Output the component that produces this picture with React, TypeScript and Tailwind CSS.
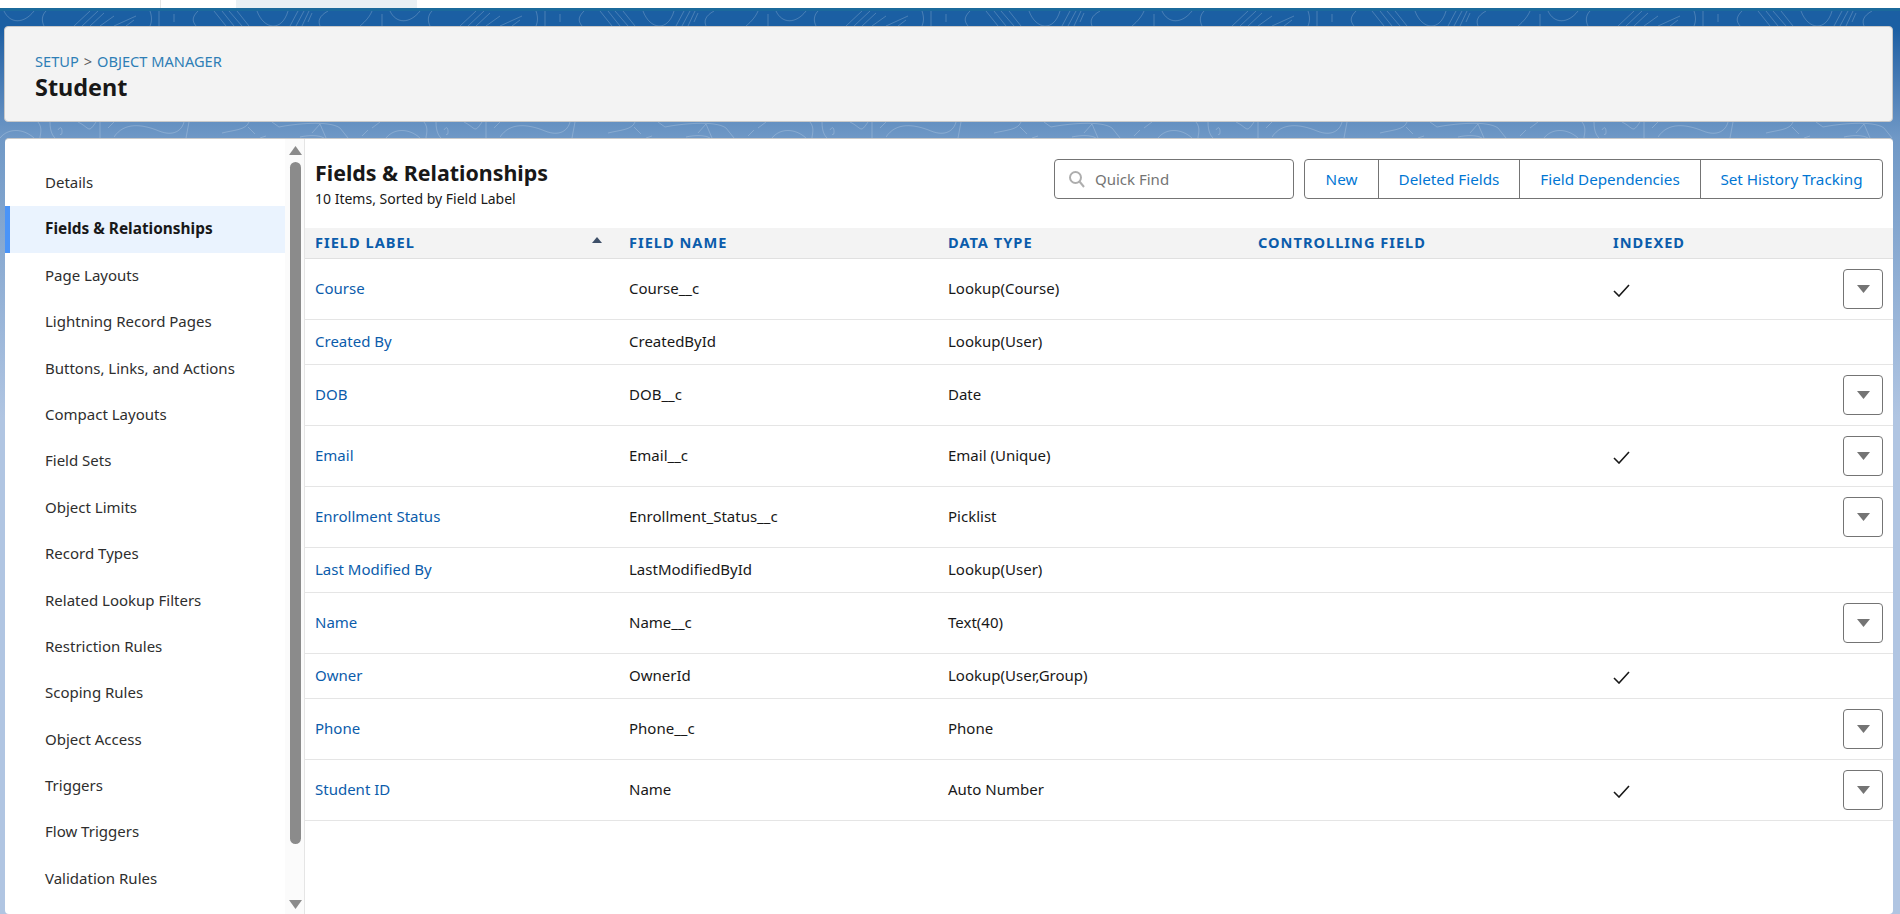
import React from "react";

const side = ["Details","Fields & Relationships","Page Layouts","Lightning Record Pages","Buttons, Links, and Actions","Compact Layouts","Field Sets","Object Limits","Record Types","Related Lookup Filters","Restriction Rules","Scoping Rules","Object Access","Triggers","Flow Triggers","Validation Rules"];

type Row = { label: string; name: string; type: string; indexed?: boolean; menu?: boolean };
const rows: Row[] = [
  { label: "Course", name: "Course__c", type: "Lookup(Course)", indexed: true, menu: true },
  { label: "Created By", name: "CreatedById", type: "Lookup(User)" },
  { label: "DOB", name: "DOB__c", type: "Date", menu: true },
  { label: "Email", name: "Email__c", type: "Email (Unique)", indexed: true, menu: true },
  { label: "Enrollment Status", name: "Enrollment_Status__c", type: "Picklist", menu: true },
  { label: "Last Modified By", name: "LastModifiedById", type: "Lookup(User)" },
  { label: "Name", name: "Name__c", type: "Text(40)", menu: true },
  { label: "Owner", name: "OwnerId", type: "Lookup(User,Group)", indexed: true },
  { label: "Phone", name: "Phone__c", type: "Phone", menu: true },
  { label: "Student ID", name: "Name", type: "Auto Number", indexed: true, menu: true },
];

const cols = "grid grid-cols-[314px_319px_310px_355px_1fr] items-center pl-[10px]";

function Pattern() {
  return (
    <svg className="absolute inset-0 w-full h-full" aria-hidden="true">
      <defs>
        <pattern id="topo" x="114" y="-11" width="386" height="914" patternUnits="userSpaceOnUse">
          <g fill="none" stroke="#ffffff" strokeOpacity="0.2" strokeWidth="1">
            <path d="M0 26 L22 16 M12 26 L20 20" />
            <path d="M36 11 C38 17 38 21 36 26 M45 11 V26 M60 14 V22 M84 11 C78 17 78 21 82 26" />
            <path d="M100 11 L112 26 M108 11 L120 26 M115 11 L128 26 M123 11 L135 26" />
            <path d="M143 11 C150 30 168 32 174 11" />
            <path d="M176 26 L184 11 M182 26 L190 11 M188 26 L195 11 M194 22 L198 13" />
            <path d="M214 11 C205 16 204 21 206 26" />
            <path d="M246 26 C252 21 256 16 258 11 M268 14 V26 M276 11 C282 24 296 24 306 11 M318 11 C313 16 314 22 316 26" />
            <path d="M346 26 L362 11 M354 26 L370 11 M362 26 L376 13 M372 26 L386 16" />
            <path d="M0 137 C10 122 28 124 45 131 C60 137 68 130 70 122 M75 122 L72 138" />
            <path d="M108 133 C120 130 132 130 135 122 M134 127 L141 134 M146 138 L152 136" />
            <path d="M158 122 L165 127 C180 124 215 120 226 128 L234 138 M186 137 C195 135 205 135 210 138 M198 133 L206 124 L212 138" />
            <path d="M248 136 L254 130 M258 128 L266 122" />
            <path d="M272 138 C280 128 295 128 306 138 M310 122 C315 128 312 135 312 138 M322 122 C322 132 325 136 327 138 M330 130 C335 122 335 138 332 134 M350 122 C362 128 360 134 368 122 M372 122 V138 M380 128 L386 122" />
          </g>
        </pattern>
      </defs>
      <rect width="100%" height="100%" fill="url(#topo)" />
    </svg>
  );
}

function Caret() {
  return (
    <svg width="13" height="8" viewBox="0 0 13 8" aria-hidden="true">
      <path d="M0 0 H13 L6.5 8 Z" fill="#747474" />
    </svg>
  );
}

export default function App() {
  return (
    <div className="h-[914px] w-[1900px] overflow-hidden flex flex-col bg-white text-[15px] text-[#181818] font-['Noto_Sans','Open_Sans',sans-serif]">
      <div className="h-2 flex shrink-0 bg-white">
        <div className="w-[161px] border-r border-[#e5e5e5]" />
        <div className="w-[75px]" />
        <div className="w-[181px] bg-[#e9f0f4]" />
      </div>
      <div className="h-[3px] shrink-0 bg-[#1b6a9c]" />
      <div className="relative flex-1 min-h-0 bg-gradient-to-b from-[#1b5fa3] from-[2%] via-[#6f98c6] via-[14%] to-[#b0c5e2] to-[45%]">
        <Pattern />
        <div className="relative h-full flex flex-col pt-[15px] pl-[4px] pr-[7px] gap-4">
          <header className="h-[96px] shrink-0 rounded-[4px] bg-[#f3f3f3] border border-[#c9c9c9] pl-[30px] pt-[23px]">
            <div className="flex items-center gap-[5px] text-[14.6px] leading-[22px] text-[#2e7eb6]">
              <span>SETUP</span>
              <span className="text-[#5c5c5c]">&gt;</span>
              <span>OBJECT MANAGER</span>
            </div>
            <h1 className="text-[23.4px] leading-[31px] font-bold text-[#181818]">Student</h1>
          </header>

          <main className="ml-px flex-1 min-h-0 flex rounded-[4px] bg-white border-t border-[#c9c9c9] overflow-hidden">
            <nav className="w-[280px] shrink-0 pt-[21px]">
              {side.map((s, i) => (
                <div
                  key={s}
                  className={
                    i === 1
                      ? "h-[46.35px] flex items-center pl-[35px] pb-[1px] bg-[#eaf3fe] border-l-[5px] border-[#4a94f8] text-[15.4px] font-bold text-[#181818]"
                      : "h-[46.35px] flex items-center pl-10 pb-[1px] text-[#2e2e2e]"
                  }
                >
                  {s}
                </div>
              ))}
            </nav>

            <div className="w-[19px] shrink-0 bg-[#fbfbfb] flex flex-col items-center pt-[7px] pl-px">
              <svg width="13" height="9" viewBox="0 0 13 9" aria-hidden="true"><path d="M6.5 0 L13 9 H0 Z" fill="#8b8b8b" /></svg>
              <div className="w-[11px] h-[682px] mt-[7px] rounded-[6px] bg-[#8b8b8b]" />
              <div className="mt-[56px]">
                <svg width="13" height="9" viewBox="0 0 13 9" aria-hidden="true"><path d="M0 0 H13 L6.5 9 Z" fill="#8b8b8b" /></svg>
              </div>
            </div>

            <section className="flex-1 min-w-0 border-l border-[#e5e5e5]">
              <div className="h-[89px] flex pl-[10px] pr-[10px]">
                <div className="pt-[18px]">
                  <h2 className="text-[21.4px] leading-[32px] font-bold text-[#181818]">Fields &amp; Relationships</h2>
                  <p className="text-[14px] leading-[16px] mt-[2px] text-[#181818]">10 Items, Sorted by Field Label</p>
                </div>
                <div className="ml-auto flex gap-[10px] pt-[20px]">
                  <div className="w-[240px] h-[40px] rounded-[4px] border border-[#747474] flex items-center pl-[14px] gap-[10px] text-[15px] text-[#747474]">
                    <svg width="16" height="17" viewBox="0 0 16 17" fill="none" stroke="#aeaeae" strokeWidth="2" aria-hidden="true">
                      <circle cx="6.5" cy="6.5" r="5.5" />
                      <path d="M10.5 10.5 L15 16" />
                    </svg>
                    <span>Quick Find</span>
                  </div>
                  <div className="h-[40px] flex rounded-[4px] border border-[#747474] text-[15.25px] text-[#0176d3]">
                    <div className="w-[73px] flex items-center justify-center">New</div>
                    <div className="w-[141px] flex items-center justify-center border-l border-[#747474]">Deleted Fields</div>
                    <div className="w-[181px] flex items-center justify-center border-l border-[#747474]">Field Dependencies</div>
                    <div className="w-[182px] flex items-center justify-center border-l border-[#747474]">Set History Tracking</div>
                  </div>
                </div>
              </div>

              <div className={`${cols} h-[31px] pb-[1px] bg-[#f3f3f3] border-b border-[#e0e0e0] text-[14.6px] font-bold tracking-[1px] text-[#0b5cab]`}>
                <div className="flex items-center pr-[27px] justify-between">
                  <span>FIELD LABEL</span>
                  <svg width="10" height="6" viewBox="0 0 10 6" className="-mt-[5px]" aria-hidden="true"><path d="M5 0 L10 6 H0 Z" fill="#3e4f68" /></svg>
                </div>
                <span>FIELD NAME</span>
                <span>DATA TYPE</span>
                <span>CONTROLLING FIELD</span>
                <span>INDEXED</span>
              </div>

              {rows.map((r) => (
                <div key={r.label} className={`${cols} ${r.menu ? "h-[61px]" : "h-[45px]"} border-b border-[#e5e5e5]`}>
                  <span className="pb-[1px] text-[#0b5cab]">{r.label}</span>
                  <span className="pb-[1px]">{r.name}</span>
                  <span className="pb-[1px]">{r.type}</span>
                  <span />
                  <div className="flex items-center justify-between pr-[10px]">
                    <span className="pt-[3px]">
                      {r.indexed && (
                        <svg width="17" height="13" viewBox="0 0 17 13" fill="none" stroke="#181818" strokeWidth="1.6" aria-hidden="true">
                          <path d="M1 7 L6 12 L16 1" />
                        </svg>
                      )}
                    </span>
                    {r.menu && (
                      <div className="w-10 h-10 rounded-[4px] border border-[#747474] flex items-center justify-center">
                        <Caret />
                      </div>
                    )}
                  </div>
                </div>
              ))}
            </section>
          </main>
        </div>
      </div>
    </div>
  );
}
